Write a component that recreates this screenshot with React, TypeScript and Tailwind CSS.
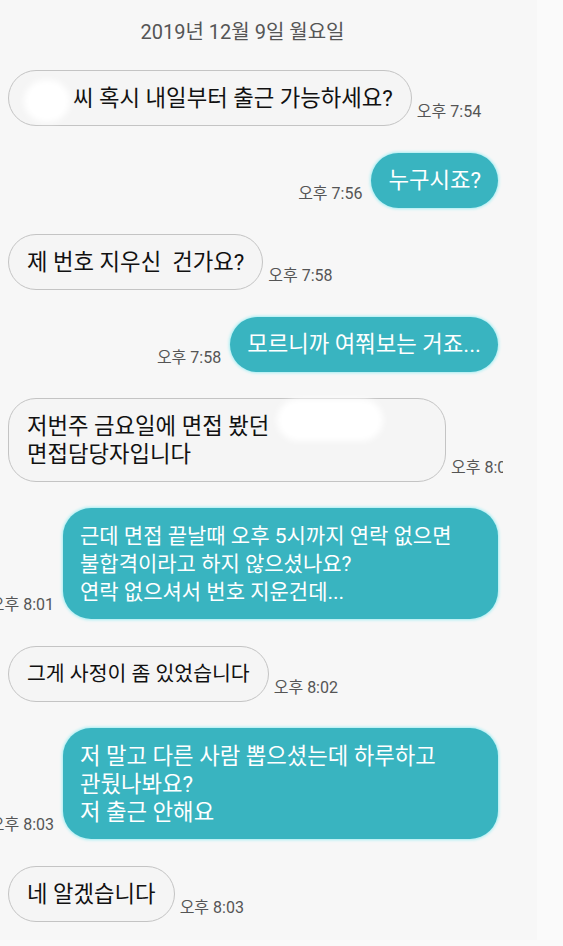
const font = { fontFamily: '"Roboto", "Noto Sans CJK KR", sans-serif' }

type Msg = {
    from: 'me' | 'them'
    time: string
    lines: React.ReactNode[]
    width?: string
    size?: string
}

// white smudge that hides names in the screenshot
const Blob = ({ box, className }: { box: string; className: string }) => (
    <span className={`relative inline-block h-0 align-middle ${box}`}>
        <span className={`absolute rounded-full bg-white blur-[3px] ${className}`} />
    </span>
)

const messages: Msg[] = [
    {
        from: 'them',
        time: '오후 7:54',
        lines: [<><Blob box="w-[46px]" className="-left-[3px] -top-[21px] w-[46px] h-[42px]" />씨 혹시 내일부터 출근 가능하세요?</>],
    },
    { from: 'me', time: '오후 7:56', lines: ['누구시죠?'] },
    { from: 'them', time: '오후 7:58', lines: ['제 번호 지우신\u00a0\u00a0건가요?'] },
    { from: 'me', time: '오후 7:58', lines: ['모르니까 여쭤보는 거죠...'] },
    {
        from: 'them',
        time: '오후 8:01',
        width: 'w-[438px]',
        lines: [<>저번주 금요일에 면접 봤던<Blob box="w-[110px]" className="left-[8px] -top-[29px] w-[106px] h-[42px]" /></>, '면접담당자입니다'],
    },
    {
        from: 'me',
        time: '오후 8:01',
        width: 'w-[435px]',
        size: 'text-[21px]',
        lines: ['근데 면접 끝날때 오후 5시까지 연락 없으면', '불합격이라고 하지 않으셨나요?', '연락 없으셔서 번호 지운건데...'],
    },
    { from: 'them', time: '오후 8:02', size: 'text-[20.5px]', lines: ['그게 사정이 좀 있었습니다'] },
    {
        from: 'me',
        time: '오후 8:03',
        width: 'w-[435px]',
        lines: ['저 말고 다른 사람 뽑으셨는데 하루하고', '관뒀나봐요?', '저 출근 안해요'],
    },
    { from: 'them', time: '오후 8:03', lines: ['네 알겠습니다'] },
]

const Time = ({ t, className }: { t: string; className: string }) => (
    <span className={`shrink-0 whitespace-nowrap text-[16px] leading-[18px] text-[#555] mb-[5px] ${className}`}>{t}</span>
)

const Bubble = ({ m }: { m: Msg }) => {
    const me = m.from === 'me'
    return (
        <div
            className={`shrink-0 whitespace-nowrap ${m.size ?? 'text-[22.3px]'} leading-[28px] rounded-[28px] ${m.width ?? ''} ${
                me
                    ? 'bg-[#39b4c0] text-white px-[17px] py-[13.5px] shadow-[0_0_3px_1px_#a3eef3]'
                    : 'bg-[#f5f5f5] text-[#111] border border-[#c4c4c4] px-[18px] py-[13px]'
            }`}
        >
            {m.lines.map((l, i) => (
                <div key={i}>{l}</div>
            ))}
        </div>
    )
}

export default function App() {
    return (
        <div style={font} className="w-[563px] h-[946px] flex bg-[#fafafa] overflow-hidden">
            <div className="w-[537px] h-[940px] bg-[#f7f7f7]">
                <div className="w-[503px] overflow-hidden flex flex-col gap-[26.4px] pt-[20px]">
                    <div className="text-center text-[20px] leading-[24px] text-[#555] pr-[18px]">2019년 12월 9일 월요일</div>
                    {messages.map((m, i) =>
                        m.from === 'me' ? (
                            <div key={i} className="flex items-end justify-end pr-[5px]">
                                <Time t={m.time} className="mr-[9px]" />
                                <Bubble m={m} />
                            </div>
                        ) : (
                            <div key={i} className="flex items-end pl-[8px]">
                                <Bubble m={m} />
                                <Time t={m.time} className="ml-[5px]" />
                            </div>
                        )
                    )}
                </div>
            </div>
        </div>
    )
}
